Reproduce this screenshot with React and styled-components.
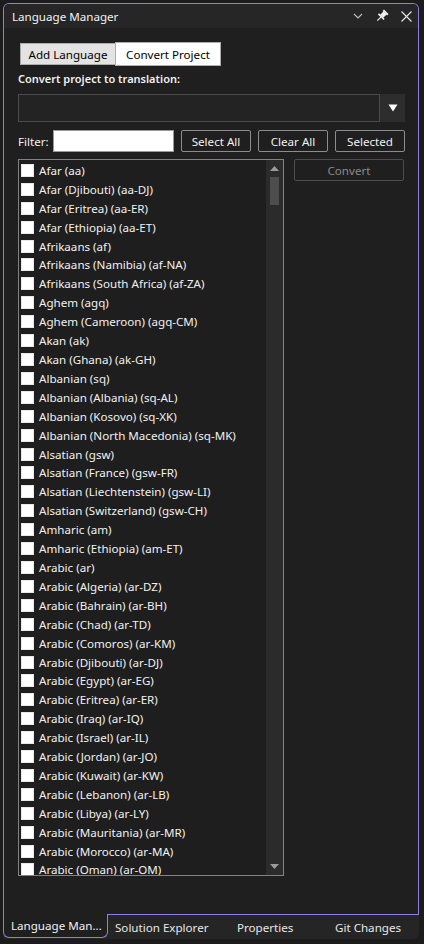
import React from "react";
import styled, { createGlobalStyle } from "styled-components";

const Global = createGlobalStyle`
  html, body { margin: 0; padding: 0; background: #1c1c1c; }
  body { font-family: "Noto Sans", "Open Sans", sans-serif; font-size: 11.6px; color: #f1f1f1; }
  * { box-sizing: border-box; }
`;

const PURPLE = "#8d80e4";
const FS = "11.6px";

const Page = styled.div`
  width: 424px;
  height: 944px;
  padding: 3px 5px 0 3px;
  display: flex;
  flex-direction: column;
  background: #1c1c1c;
`;

const Panel = styled.div`
  height: 912px;
  flex: none;
  border: 1px solid ${PURPLE};
  border-bottom: none;
  border-radius: 6px 6px 0 0;
  background: #1f1f1f;
  display: flex;
  flex-direction: column;
  overflow: hidden;
`;

const TitleBar = styled.div`
  height: 24px;
  flex: none;
  background: #262626;
  display: flex;
  align-items: center;
  padding: 0 0 0 8px;
  font-size: ${FS};
  color: #f3f3f3;
`;

const Title = styled.span`
  flex: 1;
  margin-top: 1px;
`;

const TitleIcon = styled.span`
  width: 24px;
  height: 24px;
  display: flex;
  align-items: center;
  justify-content: center;
`;

const Content = styled.div`
  flex: 1;
  padding: 14px 13px 0 14px;
  display: flex;
  flex-direction: column;
  min-height: 0;
`;

const TabRow = styled.div`
  display: flex;
  align-items: center;
  height: 24px;
  padding-left: 2px;
`;

const Tab = styled.div`
  width: ${(p) => p.$w}px;
  height: ${(p) => (p.$active ? "24px" : "22px")};
  display: flex;
  align-items: center;
  justify-content: center;
  background: ${(p) => (p.$active ? "#ffffff" : "#e3e3e3")};
  border: 1px solid #adadad;
  ${(p) => (p.$active ? "" : "border-right: none;")}
  color: #000;
  font-size: ${FS};
`;

const SectionLabel = styled.div`
  margin-top: 5px;
  height: 16px;
  line-height: 16px;
  font-weight: 600;
  font-size: 11px;
  color: #f1f1f1;
`;

const Combo = styled.div`
  margin-top: 7px;
  height: 28px;
  display: flex;
  border: 1px solid #4a4a4a;
  background: #232323;
`;

const ComboField = styled.div`
  flex: 1;
`;

const ComboButton = styled.div`
  width: 26px;
  background: #2d2d2d;
  border-left: 1px solid #4a4a4a;
  display: flex;
  align-items: center;
  justify-content: center;
  margin: -1px -1px -1px 0;
`;

const FilterRow = styled.div`
  margin-top: 8px;
  height: 22px;
  display: flex;
  align-items: center;
`;

const FilterLabel = styled.span`
  width: 35px;
  font-size: ${FS};
`;

const FilterInput = styled.div`
  width: 123px;
  height: 22px;
  background: #ffffff;
  border: 1px solid #9a9a9a;
`;

const Button = styled.div`
  width: ${(p) => p.$w || 70}px;
  height: 22px;
  flex: none;
  margin-left: ${(p) => (p.$ml === undefined ? 7 : p.$ml)}px;
  border: 1px solid ${(p) => (p.$disabled ? "#4c4c4c" : "#8c8c8c")};
  border-radius: 2px;
  display: flex;
  align-items: center;
  justify-content: center;
  color: ${(p) => (p.$disabled ? "#8a8a8a" : "#f1f1f1")};
  font-size: ${FS};
  background: #1f1f1f;
`;

const MainRow = styled.div`
  margin-top: 7px;
  display: flex;
  align-items: flex-start;
`;

const ListBox = styled.div`
  width: 266px;
  flex: none;
  height: 717px;
  border: 1px solid #828282;
  background: #1e1e1e;
  display: flex;
`;

const Items = styled.div`
  flex: 1;
  min-width: 0;
  overflow: hidden;
  padding: 1px 0 0 2px;
`;

const Item = styled.div`
  height: 18.92px;
  display: flex;
  align-items: center;
  white-space: nowrap;
  font-size: ${FS};
  color: #f1f1f1;
`;

const Check = styled.span`
  width: 13px;
  height: 13px;
  flex: none;
  background: #ffffff;
  border: 1px solid #e8e8e8;
  margin-right: 5px;
`;

const ScrollBar = styled.div`
  width: 17px;
  flex: none;
  background: #2b2b2b;
  display: flex;
  flex-direction: column;
  align-items: center;
`;

const ScrollArrow = styled.div`
  height: 17px;
  width: 17px;
  display: flex;
  align-items: center;
  justify-content: center;
`;

const Thumb = styled.div`
  width: 9px;
  height: 28px;
  background: #4d4d4d;
`;

const ScrollSpace = styled.div`
  flex: 1;
`;

const SideCol = styled.div`
  margin-left: 10px;
  display: flex;
  flex-direction: column;
`;

const TabStrip = styled.div`
  height: 24px;
  display: flex;
  background: #252525;
  border-radius: 0 0 6px 0;
`;

const BottomTabActive = styled.div`
  width: 105px;
  height: 24px;
  margin-top: -1px;
  border: 1px solid ${PURPLE};
  border-top: none;
  border-radius: 0 0 6px 6px;
  background: #1f1f1f;
  display: flex;
  align-items: center;
  padding-left: 7px;
  font-size: ${FS};
  color: #f1f1f1;
  position: relative;
  z-index: 1;
`;

const StripRest = styled.div`
  flex: 1;
  display: flex;
  align-items: center;
  border-top: 1px solid ${PURPLE};
  margin-left: -1px;
  margin-top: -1px;
  height: 24px;
`;

const BottomTab = styled.div`
  width: ${(p) => p.$w}px;
  padding-left: ${(p) => p.$pl}px;
  font-size: ${FS};
  color: #e8e8e8;
  white-space: nowrap;
  margin-top: 1px;
`;

const items = [
  "Afar (aa)",
  "Afar (Djibouti) (aa-DJ)",
  "Afar (Eritrea) (aa-ER)",
  "Afar (Ethiopia) (aa-ET)",
  "Afrikaans (af)",
  "Afrikaans (Namibia) (af-NA)",
  "Afrikaans (South Africa) (af-ZA)",
  "Aghem (agq)",
  "Aghem (Cameroon) (agq-CM)",
  "Akan (ak)",
  "Akan (Ghana) (ak-GH)",
  "Albanian (sq)",
  "Albanian (Albania) (sq-AL)",
  "Albanian (Kosovo) (sq-XK)",
  "Albanian (North Macedonia) (sq-MK)",
  "Alsatian (gsw)",
  "Alsatian (France) (gsw-FR)",
  "Alsatian (Liechtenstein) (gsw-LI)",
  "Alsatian (Switzerland) (gsw-CH)",
  "Amharic (am)",
  "Amharic (Ethiopia) (am-ET)",
  "Arabic (ar)",
  "Arabic (Algeria) (ar-DZ)",
  "Arabic (Bahrain) (ar-BH)",
  "Arabic (Chad) (ar-TD)",
  "Arabic (Comoros) (ar-KM)",
  "Arabic (Djibouti) (ar-DJ)",
  "Arabic (Egypt) (ar-EG)",
  "Arabic (Eritrea) (ar-ER)",
  "Arabic (Iraq) (ar-IQ)",
  "Arabic (Israel) (ar-IL)",
  "Arabic (Jordan) (ar-JO)",
  "Arabic (Kuwait) (ar-KW)",
  "Arabic (Lebanon) (ar-LB)",
  "Arabic (Libya) (ar-LY)",
  "Arabic (Mauritania) (ar-MR)",
  "Arabic (Morocco) (ar-MA)",
  "Arabic (Oman) (ar-OM)",
];

const Chevron = () => (
  <svg width="10" height="6" viewBox="0 0 10 6">
    <polyline points="1,1 5,5 9,1" fill="none" stroke="#bdbdbd" strokeWidth="1.1" />
  </svg>
);

const Pin = () => (
  <svg width="14" height="14" viewBox="-7 -7 14 14">
    <g transform="rotate(45)">
      <rect x="-3.2" y="-6" width="6.4" height="2" fill="#f2f2f2" />
      <rect x="-2.2" y="-4.2" width="4.4" height="4.5" fill="#f2f2f2" />
      <rect x="-4" y="0.2" width="8" height="1.6" fill="#f2f2f2" />
      <rect x="-0.6" y="1.6" width="1.2" height="5" fill="#f2f2f2" />
    </g>
  </svg>
);

const Close = () => (
  <svg width="11" height="11" viewBox="0 0 11 11">
    <path d="M0.5 0.5 L10.5 10.5 M10.5 0.5 L0.5 10.5" stroke="#e6e6e6" strokeWidth="1.1" fill="none" />
  </svg>
);

const Down = () => (
  <svg width="10" height="8" viewBox="0 0 10 8">
    <polygon points="0.5,0.5 9.5,0.5 5,7.5" fill="#ffffff" />
  </svg>
);

const SmallTri = ({ up }) => (
  <svg width="9" height="5" viewBox="0 0 9 5">
    <polygon points={up ? "0,5 9,5 4.5,0" : "0,0 9,0 4.5,5"} fill="#9a9a9a" />
  </svg>
);

export default function App() {
  return (
    <>
      <Global />
      <Page>
        <Panel>
          <TitleBar>
            <Title>Language Manager</Title>
            <TitleIcon><Chevron /></TitleIcon>
            <TitleIcon><Pin /></TitleIcon>
            <TitleIcon><Close /></TitleIcon>
          </TitleBar>
          <Content>
            <TabRow>
              <Tab $w={95}>Add Language</Tab>
              <Tab $w={106} $active>Convert Project</Tab>
            </TabRow>
            <SectionLabel>Convert project to translation:</SectionLabel>
            <Combo>
              <ComboField />
              <ComboButton><Down /></ComboButton>
            </Combo>
            <FilterRow>
              <FilterLabel>Filter:</FilterLabel>
              <FilterInput />
              <Button>Select All</Button>
              <Button>Clear All</Button>
              <Button>Selected</Button>
            </FilterRow>
            <MainRow>
              <ListBox>
                <Items>
                  {items.map((t) => (
                    <Item key={t}>
                      <Check />
                      {t}
                    </Item>
                  ))}
                </Items>
                <ScrollBar>
                  <ScrollArrow><SmallTri up /></ScrollArrow>
                  <Thumb />
                  <ScrollSpace />
                  <ScrollArrow><SmallTri /></ScrollArrow>
                </ScrollBar>
              </ListBox>
              <SideCol>
                <Button $ml={0} $w={110} $disabled>Convert</Button>
              </SideCol>
            </MainRow>
          </Content>
        </Panel>
        <TabStrip>
          <BottomTabActive>Language Man...</BottomTabActive>
          <StripRest>
            <BottomTab $w={122} $pl={8}>Solution Explorer</BottomTab>
            <BottomTab $w={98} $pl={8}>Properties</BottomTab>
            <BottomTab $w={90} $pl={8}>Git Changes</BottomTab>
          </StripRest>
        </TabStrip>
      </Page>
    </>
  );
}
